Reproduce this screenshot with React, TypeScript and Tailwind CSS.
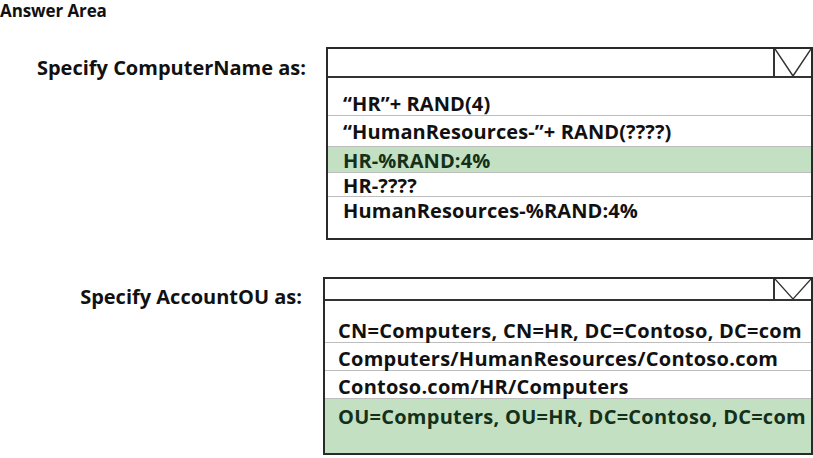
const font = { fontFamily: '"Open Sans", "Noto Sans", sans-serif' };

function Arrow() {
  return (
    <div className="flex h-full w-[38px] items-stretch border-l-2 border-[#333]">
      <svg viewBox="0 0 38 30" className="h-full w-full" preserveAspectRatio="none">
        <path d="M0 0 L19 30 L38 0" fill="none" stroke="#333" strokeWidth="1.6" />
      </svg>
    </div>
  );
}

type Opt = { text: string; h: string; on?: boolean };

function Dropdown({
  opts,
  width,
  pt,
  pb,
  head,
  text,
}: {
  opts: Opt[];
  width: string;
  pt: string;
  pb: string;
  head: string;
  text: string;
}) {
  return (
    <div className={`flex flex-col border-2 border-[#2a2a2a] bg-white ${width}`}>
      <div className={`flex justify-end border-b-2 border-[#333] ${head}`}>
        <Arrow />
      </div>
      <div className={`flex flex-col ${pt}`}>
        {opts.map((o, i) => (
          <div
            key={o.text}
            className={`flex items-center whitespace-nowrap font-bold leading-none ${text} ${o.h} ${
              i < opts.length - 1 ? "border-b border-[#bdbdbd]" : ""
            } ${o.on ? "bg-[#c4e0c2] text-[#14301a]" : "text-[#111]"}`}
          >
            {o.text}
          </div>
        ))}
        <div className={pb} />
      </div>
    </div>
  );
}

export default function App() {
  return (
    <div className="relative h-[458px] w-[813px] overflow-hidden bg-white text-[#111]" style={font}>
      <div className="h-[20px] pt-[1px] text-[17px] font-bold leading-[19px] tracking-[-0.1px]">Answer Area</div>

      <div className="mt-[27px] flex items-start">
        <div className="flex w-[306px] justify-end pt-[9px] text-[20px] font-bold leading-[24px]">
          Specify ComputerName as:
        </div>
        <div className="ml-[20px]">
          <Dropdown
            width="w-[487px]"
            head="h-[29px]"
            pt="pt-[12px]"
            pb="h-[15px]"
            text="px-[15px] pt-[2px] text-[20px] tracking-[0.1px]"
            opts={[
              { text: "\u201cHR\u201d+ RAND(4)", h: "h-[26px]" },
              { text: "\u201cHumanResources-\u201d+ RAND(????)", h: "h-[31px]" },
              { text: "HR-%RAND:4%", h: "h-[26px]", on: true },
              { text: "HR-????", h: "h-[24px]" },
              { text: "HumanResources-%RAND:4%", h: "h-[26px]" },
            ]}
          />
        </div>
      </div>

      <div className="mt-[37px] flex items-start">
        <div className="flex w-[302px] justify-end pt-[8px] text-[20px] font-bold leading-[24px]">
          Specify AccountOU as:
        </div>
        <div className="ml-[21px]">
          <Dropdown
            width="w-[490px]"
            head="h-[22px]"
            pt="pt-[15px]"
            pb="h-[0px]"
            text="pl-[13px] pt-[4px] text-[20px] tracking-[0.25px]"
            opts={[
              { text: "CN=Computers, CN=HR, DC=Contoso, DC=com", h: "h-[27px]" },
              { text: "Computers/HumanResources/Contoso.com", h: "h-[28px]" },
              { text: "Contoso.com/HR/Computers", h: "h-[28px]" },
              { text: "OU=Computers, OU=HR, DC=Contoso, DC=com", h: "h-[54px] !items-start !pt-[8px]", on: true },
            ]}
          />
        </div>
      </div>
    </div>
  );
}
